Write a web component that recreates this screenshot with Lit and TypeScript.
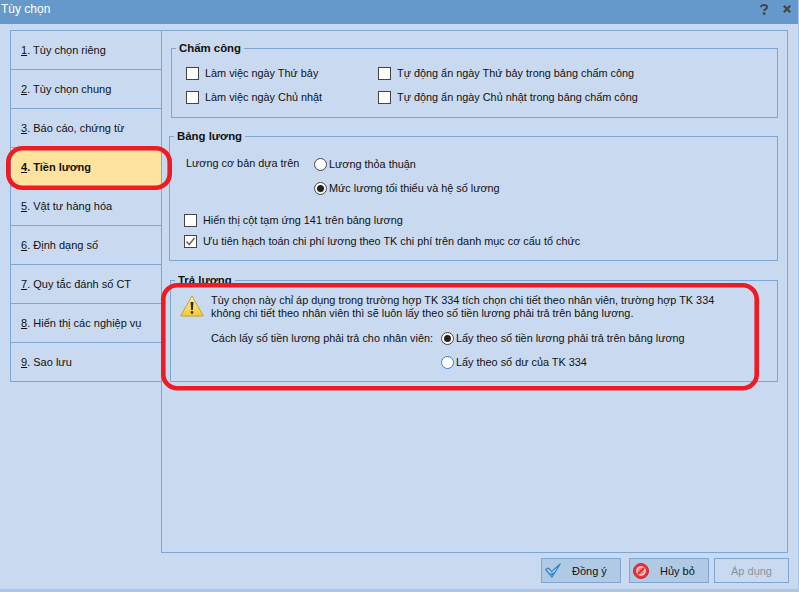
import { LitElement, html, css, svg } from "lit";
import { customElement } from "lit/decorators.js";

const tabs: [string, string][] = [
  ["1", "Tùy chọn riêng"],
  ["2", "Tùy chọn chung"],
  ["3", "Báo cáo, chứng từ"],
  ["4", "Tiền lương"],
  ["5", "Vật tư hàng hóa"],
  ["6", "Định dạng số"],
  ["7", "Quy tắc đánh số CT"],
  ["8", "Hiển thị các nghiệp vụ"],
  ["9", "Sao lưu"],
];

@customElement("app-root")
export class AppRoot extends LitElement {
  static styles = css`
    :host {
      display: block;
      position: relative;
      width: 799px;
      height: 592px;
      overflow: hidden;
      background: #c9daf0;
      font-family: "Liberation Sans", Arial, sans-serif;
      font-size: 10.87px;
      color: #111;
    }
    .window { display: flex; flex-direction: column; width: 798px; height: 588px; }
    .edge-r { position: absolute; right: 0; top: 0; width: 1px; height: 592px; background: #a9c4e4; }
    .edge-b { position: absolute; left: 0; bottom: 0; width: 799px; height: 3px; background: #abc6e6; }
    .title {
      height: 24px; flex: none; box-sizing: border-box;
      background: #6699cb; color: #fff; font-size: 12px;
      display: flex; align-items: center; padding: 0 7px 6px 1px;
    }
    .title .grow { flex: 1; }
    .title svg { display: block; }
    .title .help { margin-right: 15px; }
    .main { flex: none; display: flex; padding: 6px 0 0 10px; height: 529px; box-sizing: border-box; }
    .tabs { width: 151px; flex: none; font-size: 11px; }
    .tab {
      box-sizing: border-box; height: 39px; border: 1px solid #7ea6d3; border-bottom: none; border-right: none;
      padding-left: 10px; display: flex; align-items: center;
    }
    .tab:last-child { height: 40px; border-bottom: 1px solid #7ea6d3; }
    .tab.on { background: #fde39d; font-weight: bold; }
    .panel {
      flex: none; width: 627px; box-sizing: border-box; height: 523px;
      border: 1px solid #7ea6d3; padding: 11px 9px 0 8px;
    }
    fieldset {
      margin: 0; padding: 0; min-width: 0; box-sizing: border-box; border: 1px solid #7ea6d3;
    }
    legend { font-weight: bold; font-size: 11.4px; padding: 0 3px; line-height: 13px; margin-left: 4px; }
    .g1 { margin-left: 1px; height: 76px; }
    .g2 { margin: 12px 0 0 -1px; height: 131px; }
    .g3 { margin-top: 13px; height: 108px; }
    .grid { display: grid; grid-template-columns: 192px 1fr; row-gap: 6px; padding: 9px 0 0 14px; }
    .row { display: flex; align-items: center; height: 18px; white-space: nowrap; }
    .box {
      flex: none; width: 13px; height: 13px; box-sizing: border-box; background: #fff;
      border: 1px solid #444; margin-right: 6px; display: flex;
    }
    .box svg { display: block; }
    .radio {
      flex: none; width: 13px; height: 13px; box-sizing: border-box; background: #fff;
      border: 1px solid #444; border-radius: 50%; margin-right: 2px; display: flex; align-items: center; justify-content: center;
    }
    .radio.on::after { content: ""; width: 7px; height: 7px; border-radius: 50%; background: #222; }
    .radio.focus { border-color: #2f7fd0; }
    .base { display: flex; padding: 12px 0 0 16px; }
    .base .lbl { width: 128px; line-height: 16px; }
    .opts { display: flex; flex-direction: column; gap: 6px; }
    .checks { display: flex; flex-direction: column; gap: 3px; padding: 14px 0 0 14px; }
    .warn { display: flex; padding: 7px 0 0 9px; }
    .warn svg { flex: none; margin: 1px 7px 0 0; display: block; }
    .warn p { margin: 0; line-height: 13px; white-space: nowrap; }
    .pay { display: flex; padding: 9px 0 0 40px; }
    .pay .lbl { width: 230px; line-height: 18px; white-space: nowrap; }
    .footer { display: flex; padding: 5px 0 0 541px; gap: 8px; }
    .btn {
      box-sizing: border-box; width: 80px; height: 25px; background: #b0cae6; border: 1px solid #7ea6d3;
      display: flex; align-items: center; padding-left: 3px; font-size: 11px;
    }
    .btn svg { flex: none; display: block; }
    .btn .ok { margin-right: 11px; }
    .btn .no { margin-right: 11px; }
    .btn.off { background: transparent; width: 75px; margin-left: -3px; padding: 0; justify-content: center; color: #8a929c; }
    .rings { position: absolute; left: 0; top: 0; pointer-events: none; }
  `;

  private check(checked = false) {
    return html`<span class="box">${checked
      ? html`<svg width="11" height="11" viewBox="0 0 11 11"><path d="M1.5 5.5 4.2 8.5 9.5 2" fill="none" stroke="#666" stroke-width="1.5"/></svg>`
      : ""}</span>`;
  }

  render() {
    return html`
      <div class="window">
        <div class="title">
          <span>Tùy chọn</span><span class="grow"></span>
          <svg class="help" width="8" height="11" viewBox="0 0 8 11"><path d="M1 3.2C1 1.6 2.4 1 4 1 5.8 1 7 1.8 7 3.2 7 5.2 4.1 4.9 4.1 7" fill="none" stroke="#444" stroke-width="2"/><rect x="2.9" y="8.3" width="2.5" height="2.5" fill="#444"/></svg>
          <svg class="close" width="8" height="8" viewBox="0 0 8 8"><path d="M.8.8 7.2 7.2M7.2.8.8 7.2" stroke="#444" stroke-width="2.2"/></svg>
        </div>
        <div class="main">
          <div class="tabs">
            ${tabs.map(([n, t], i) => html`<div class="tab ${i === 3 ? "on" : ""}"><span><u>${n}</u>. ${t}</span></div>`)}
          </div>
          <div class="panel">
            <fieldset class="g1">
              <legend>Chấm công</legend>
              <div class="grid">
                <div class="row">${this.check()}Làm việc ngày Thứ bảy</div>
                <div class="row">${this.check()}Tự động ẩn ngày Thứ bảy trong bảng chấm công</div>
                <div class="row">${this.check()}Làm việc ngày Chủ nhật</div>
                <div class="row">${this.check()}Tự động ẩn ngày Chủ nhật trong bảng chấm công</div>
              </div>
            </fieldset>
            <fieldset class="g2">
              <legend>Bảng lương</legend>
              <div class="base">
                <div class="lbl">Lương cơ bản dựa trên</div>
                <div class="opts">
                  <div class="row"><span class="radio"></span>Lương thỏa thuận</div>
                  <div class="row"><span class="radio on"></span>Mức lương tối thiểu và hệ số lương</div>
                </div>
              </div>
              <div class="checks">
                <div class="row">${this.check()}Hiển thị cột tạm ứng 141 trên bảng lương</div>
                <div class="row">${this.check(true)}Ưu tiên hạch toán chi phí lương theo TK chi phí trên danh mục cơ cấu tổ chức</div>
              </div>
            </fieldset>
            <fieldset class="g3">
              <legend>Trả lương</legend>
              <div class="warn">
                <svg width="24" height="22" viewBox="0 0 24 22">
                  <defs><linearGradient id="w" x1="0" y1="0" x2="0" y2="1"><stop offset="0" stop-color="#fff3a0"/><stop offset="1" stop-color="#f5c92e"/></linearGradient></defs>
                  <path d="M12 1 23.3 21H.7Z" fill="url(#w)" stroke="#c2a040" stroke-linejoin="round"/>
                  <path d="M10.5 7h3l-.7 8h-1.6Z" fill="#2c2c2c"/><rect x="10.8" y="16.2" width="2.4" height="2.4" fill="#2c2c2c"/>
                </svg>
                <p>Tùy chọn này chỉ áp dụng trong trường hợp TK 334 tích chọn chi tiết theo nhân viên, trường hợp TK 334<br/>không chi tiết theo nhân viên thì sẽ luôn lấy theo số tiền lương phải trả trên bảng lương.</p>
              </div>
              <div class="pay">
                <div class="lbl">Cách lấy số tiền lương phải trả cho nhân viên:</div>
                <div class="opts">
                  <div class="row"><span class="radio on"></span>Lấy theo số tiền lương phải trả trên bảng lương</div>
                  <div class="row"><span class="radio focus"></span>Lấy theo số dư của TK 334</div>
                </div>
              </div>
            </fieldset>
          </div>
        </div>
        <div class="footer">
          <div class="btn"><svg class="ok" width="16" height="15" viewBox="0 0 16 15"><path d="M.8 6.5 3.4 5 6.6 8.6 15.2 1 7 14Z" fill="#b5dcf8" stroke="#2f7fd0" stroke-width="1.2" stroke-linejoin="round"/><path d="M5 9.5 7 12.2 10 8.5 6.8 10.4Z" fill="#1f5fae"/></svg><span>Đồng ý</span></div>
          <div class="btn"><svg class="no" width="16" height="16" viewBox="0 0 16 16"><circle cx="8" cy="8" r="7.5" fill="#e5343c" stroke="#c22a2a"/><circle cx="8" cy="8" r="4.2" fill="#f08a8a" stroke="#fbe0e0" stroke-width="1.2"/><path d="M4.9 11.1 11.1 4.9" stroke="#e5343c" stroke-width="2.2"/></svg><span>Hủy bỏ</span></div>
          <div class="btn off"><span>Áp dụng</span></div>
        </div>
      </div>
      <div class="edge-r"></div>
      <div class="edge-b"></div>
      <svg class="rings" width="799" height="592" viewBox="0 0 799 592" fill="none" stroke="#ed1c24" stroke-width="4.6">
        ${svg`<rect x="8.3" y="148.3" width="161.4" height="39.4" rx="14"/>`}
        ${svg`<rect x="163.3" y="285.3" width="593.4" height="103" rx="14"/>`}
      </svg>
    `;
  }
}
